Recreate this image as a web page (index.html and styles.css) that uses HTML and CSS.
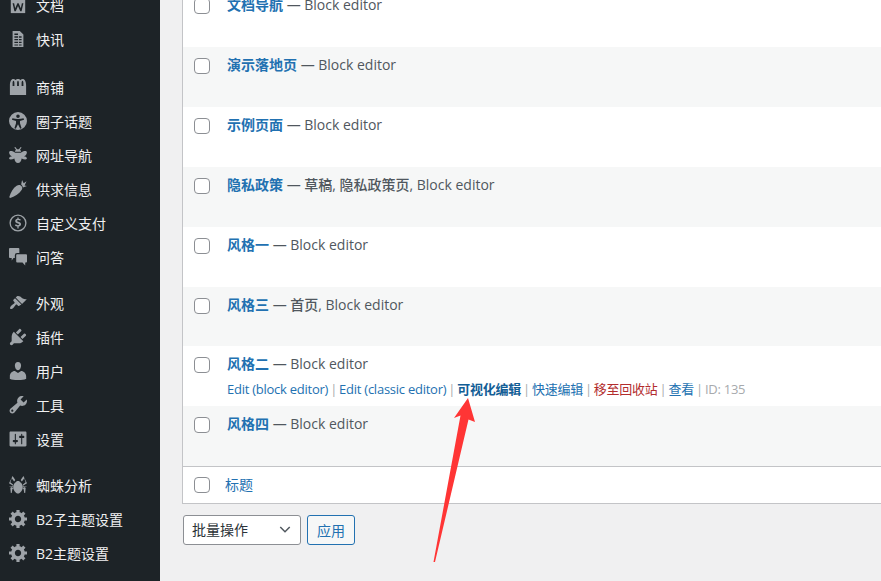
FILE: index.html
```html
<!DOCTYPE html>
<html lang="zh">
<head>
<meta charset="utf-8">
<title>页面</title>
<link rel="stylesheet" href="styles.css">
</head>
<body>
<div class="shell">
  <nav class="side">
    <ul class="menu">
      <li><svg viewBox="0 0 20 20"><path d="M2 0h16v19H2z"/><path class="cut" d="M4 8l2 9h1.500L10 11l2.500 6H14l2-9h-1.700l-1.200 5.500L10.700 8H9.300l-2.400 5.500L5.700 8z"/></svg><span>文档</span></li>
      <li><svg viewBox="0 0 20 20"><path fill-rule="evenodd" d="M4 1h8l4 4v14H4zM6 7v1.500h4V7zm5 0v1.500h3V7zM6 10v1.500h4V10zm5 0v1.500h3V10zM6 13v1.500h4V13zm5 0v1.500h3V13zM6 16v1.200h4V16zm5 0v1.200h3V16zM6 4v1.500h4V4z"/></svg><span>快讯</span></li>
      <li class="gap wide"></li>
      <li class="tall"><svg viewBox="0 0 20 20"><path fill-rule="evenodd" d="M1 9V8c0-4 1.500-7 3.800-7 1 0 1.800.5 2.300 1.300C7.800 1.500 8.900 1 10 1s2.200.5 2.900 1.300C13.400 1.500 14.200 1 15.200 1 17.500 1 19 4 19 8v11H1zM4 9V6c0-2 .4-3 1-3s1 1 1 3v3zm5 0V6c0-2 .4-3 1-3s1 1 1 3v3zm5 0V6c0-2 .4-3 1-3s1 1 1 3v3z"/></svg><span>商铺</span></li>
      <li><svg viewBox="0 0 20 20"><path fill-rule="evenodd" d="M10 0a10 10 0 1 1 0 20 10 10 0 0 1 0-20zm0 2.800a2 2 0 1 0 0 4 2 2 0 0 0 0-4zM3.800 7l-.5 1.500L7.800 10v2.500L6 18l1.500.6L10 13.500l2.500 5.100L14 18l-1.800-5.500V10l4.500-1.500-.5-1.500c-4 1.200-8.400 1.200-12.400 0z"/></svg><span>圈子话题</span></li>
      <li><svg viewBox="0 0 20 20"><path d="M7 1l2 2.500h2L13 1l1 .7-1.800 2.600c.8.600 1.300 1.400 1.300 2.200h-7c0-.8.500-1.600 1.300-2.200L5.900 1.700zM6.800 7.500h6.400c2-2 5.300-2.500 6.300-1.500s0 4.500-3 5.500c2.500.3 3.800 1.700 3.300 2.800s-3.300 1-5.800-.5c-.2 2.700-1.800 5.200-4 5.200s-3.800-2.500-4-5.200C3.500 15.300.700 15.400.200 14.300S1 11.800 3.500 11.500C.500 10.500-.500 7 .5 6s4.300-.5 6.300 1.500z"/></svg><span>网址导航</span></li>
      <li><svg viewBox="0 0 20 20"><path d="M13 6c1.800 1.200 2.300 3 1.200 4.800C11.500 15 6.500 18.500 2 19.800 .800 20.100.200 19.500.500 18.300 2 13.500 4.500 9 8.500 6.300c1.600-1 3.200-1 4.500-.3zM13.500 5l1-5 1.800 3.500L19.500 1.500 17.300 6l2.700.8-4.500 1.400C15 6.800 14.500 5.700 13.500 5z"/></svg><span>供求信息</span></li>
      <li><svg viewBox="0 0 20 20"><path fill-rule="evenodd" d="M10 .5a9.500 9.500 0 1 1 0 19 9.500 9.500 0 0 1 0-19zM10 2a8 8 0 1 0 0 16A8 8 0 0 0 10 2zM9.300 4h1.400v1.300c1 .1 1.800.4 2.400.9l-.7 1.200c-.6-.4-1.300-.7-2.200-.7-.8 0-1.300.3-1.300.8 0 1.400 4.500.7 4.500 3.900 0 1.300-1 2.200-2.700 2.400V16H9.300v-2.200c-1.100-.1-2-.5-2.700-1.100l.8-1.200c.7.600 1.500.9 2.500.9.900 0 1.500-.3 1.500-.9 0-1.500-4.500-.7-4.500-3.800 0-1.300 1-2.100 2.400-2.300z"/></svg><span>自定义支付</span></li>
      <li><svg viewBox="0 0 20 20"><path d="M1 0h9.500a1 1 0 0 1 1 1v4.500H9a2.500 2.500 0 0 0-2.500 2.500v3H5l-2 3v-3H1a1 1 0 0 1-1-1V1a1 1 0 0 1 1-1zM9 7h10a1 1 0 0 1 1 1v7a1 1 0 0 1-1 1h-1v3.500l-3-3.500H9a1 1 0 0 1-1-1V8a1 1 0 0 1 1-1z"/></svg><span>问答</span></li>
      <li class="gap"></li>
      <li><svg viewBox="0 0 20 20"><path d="M14.480 11.060 7.410 3.990l1.500-1.500c.5-.56 2.300-.47 3.510.32 1.210.8 1.430 1.280 2.910 2.100 1.180.64 2.450 1.260 4.450.85zm-.71.71L6.700 4.700 4.930 6.470c-.39.39-.39 1.020 0 1.410l1.060 1.060c.39.39.39 1.030 0 1.420-.6.6-1.430 1.110-2.210 1.690-.35.26-.7.53-1.010.84-.95.95-2.150 2.600-1.350 3.600.8.8 2.650-.4 3.600-1.350.31-.31.58-.66.84-1.010.58-.78 1.090-1.610 1.690-2.210.39-.39 1.030-.39 1.420 0l1.060 1.060c.39.39 1.020.39 1.410 0z"/></svg><span>外观</span></li>
      <li><svg viewBox="1.500 1.500 17 17"><path d="M13.110 4.360 9.870 7.600 8 5.730l3.240-3.240c.35-.34 1.050-.2 1.560.32.52.51.66 1.210.31 1.550zm-8 1.770.91-1.120 9.010 9.010-1.190.84c-.71.71-2.630 1.160-3.820 1.160H6.140L4.900 17.260c-.59.59-1.540.59-2.120 0-.59-.58-.59-1.530 0-2.120l1.240-1.240v-3.880c0-1.130.4-3.190 1.090-3.890zm7.260 3.970 3.240-3.240c.34-.35 1.040-.21 1.550.31.52.51.66 1.210.31 1.550l-3.240 3.250z"/></svg><span>插件</span></li>
      <li><svg viewBox="2 2 16 16"><path d="M10 9.250c-2.270 0-2.730-3.440-2.730-3.440C7 4.020 7.820 2 9.970 2c2.160 0 2.980 2.020 2.710 3.810 0 0-.41 3.440-2.680 3.440zm0 2.570L12.720 10c2.390 0 4.520 2.330 4.520 4.530v2.490s-3.650 1.130-7.240 1.130c-3.650 0-7.240-1.130-7.240-1.130v-2.490c0-2.250 1.940-4.480 4.470-4.480z"/></svg><span>用户</span></li>
      <li><svg viewBox="1.500 2 16.500 16.500"><path d="M16.680 9.770c-1.340 1.340-3.300 1.670-4.950.99l-5.410 6.520c-.99.99-2.590.99-3.580 0s-.99-2.590 0-3.570l6.520-5.420c-.68-1.650-.35-3.610.99-4.950 1.280-1.280 3.120-1.620 4.720-1.060l-2.890 2.890 2.820 2.820 2.860-2.870c.53 1.580.18 3.390-1.080 4.650zM3.810 16.210c.4.39 1.040.39 1.430 0 .4-.4.4-1.040 0-1.430-.39-.4-1.030-.4-1.430 0-.39.39-.39 1.030 0 1.430z"/></svg><span>工具</span></li>
      <li><svg viewBox="1.500 1.500 17 17"><path fill-rule="evenodd" d="M18 16V4c0-.55-.45-1-1-1H3c-.55 0-1 .45-1 1v12c0 .55.45 1 1 1h14c.55 0 1-.45 1-1zM8 11h1c.55 0 1 .45 1 1s-.45 1-1 1H8v1.500c0 .28-.22.5-.5.5s-.5-.22-.5-.5V13H6c-.55 0-1-.45-1-1s.45-1 1-1h1V5.500c0-.28.22-.5.5-.5s.5.22.5.5V11zm5-2h-1c-.55 0-1-.45-1-1s.45-1 1-1h1V5.500c0-.28.22-.5.5-.5s.5.22.5.5V7h1c.55 0 1 .45 1 1s-.45 1-1 1h-1v5.500c0 .28-.22.5-.5.5s-.5-.22-.5-.5V9z"/></svg><span>设置</span></li>
      <li class="gap narrow"></li>
      <li class="tall"><svg viewBox="0 0 20 20"><path d="M10 5.500c1 0 2 .5 2.500 1.500 1.700 1 2.800 3 2.800 5.500 0 3.300-2.800 7-5.300 7s-5.300-3.700-5.300-7c0-2.500 1.100-4.500 2.800-5.500.5-1 1.500-1.500 2.500-1.500zM4 0 7 4.500 5.700 6 3 2.500 1.500 7l3 2.500v1.200L0 8zm12 0-3 4.500L14.300 6 17 2.500 18.500 7l-3 2.500v1.200L20 8zM0 12l4.500-.5v1l-3 .8L2 19l1 0 .8-4.500 1-.5v-.5zm20 0-4.500-.5v1l3 .8L18 19h-1l-.8-4.500-1-.5v-.5z"/></svg><span>蜘蛛分析</span></li>
      <li><svg viewBox="1 2 17 17"><path fill-rule="evenodd" d="M18 12h-2.180c-.17.7-.44 1.350-.81 1.930l1.540 1.540-2.100 2.100-1.540-1.540c-.58.36-1.230.63-1.910.79V19H8v-2.180c-.68-.16-1.330-.43-1.910-.79l-1.540 1.540-2.120-2.120 1.540-1.540c-.36-.58-.63-1.230-.79-1.910H1V9.030h2.170c.16-.7.44-1.350.8-1.940L2.430 5.550l2.100-2.100 1.540 1.540c.58-.37 1.240-.64 1.930-.81V2h3v2.180c.68.16 1.330.43 1.910.79l1.540-1.540 2.120 2.120-1.540 1.540c.36.59.64 1.240.8 1.940H18zm-8.500 1.500c1.660 0 3-1.340 3-3s-1.340-3-3-3-3 1.340-3 3 1.340 3 3 3z"/></svg><span>B2子主题设置</span></li>
      <li><svg viewBox="1 2 17 17"><path fill-rule="evenodd" d="M18 12h-2.180c-.17.7-.44 1.350-.81 1.930l1.540 1.540-2.100 2.100-1.540-1.540c-.58.36-1.230.63-1.910.79V19H8v-2.180c-.68-.16-1.330-.43-1.910-.79l-1.540 1.540-2.120-2.120 1.540-1.540c-.36-.58-.63-1.230-.79-1.910H1V9.030h2.170c.16-.7.44-1.350.8-1.940L2.430 5.550l2.100-2.100 1.540 1.540c.58-.37 1.240-.64 1.930-.81V2h3v2.180c.68.16 1.330.43 1.910.79l1.540-1.540 2.120 2.120-1.540 1.540c.36.59.64 1.240.8 1.940H18zm-8.500 1.500c1.660 0 3-1.340 3-3s-1.340-3-3-3-3 1.340-3 3 1.340 3 3 3z"/></svg><span>B2主题设置</span></li>
    </ul>
  </nav>
  <main class="main">
    <div class="table">
      <div class="row"><i class="check"></i><div class="cell"><p class="line"><a class="title">文档导航</a> — Block editor</p></div></div>
      <div class="row alt"><i class="check"></i><div class="cell"><p class="line"><a class="title">演示落地页</a> — Block editor</p></div></div>
      <div class="row"><i class="check"></i><div class="cell"><p class="line"><a class="title">示例页面</a> — Block editor</p></div></div>
      <div class="row alt"><i class="check"></i><div class="cell"><p class="line"><a class="title">隐私政策</a> — 草稿, 隐私政策页, Block editor</p></div></div>
      <div class="row"><i class="check"></i><div class="cell"><p class="line"><a class="title">风格一</a> — Block editor</p></div></div>
      <div class="row alt short"><i class="check"></i><div class="cell"><p class="line"><a class="title">风格三</a> — 首页, Block editor</p></div></div>
      <div class="row"><i class="check"></i><div class="cell"><p class="line"><a class="title">风格二</a> — Block editor</p>
        <p class="actions"><a>Edit (block editor)</a><b>|</b><a>Edit (classic editor)</a><b>|</b><a class="strong">可视化编辑</a><b>|</b><a>快速编辑</a><b>|</b><a class="trash">移至回收站</a><b>|</b><a>查看</a><b>|</b><span class="id">ID: 135</span></p></div></div>
      <div class="row alt"><i class="check"></i><div class="cell"><p class="line"><a class="title">风格四</a> — Block editor</p></div></div>
      <div class="foot"><i class="check"></i><a class="foot-link">标题</a></div>
    </div>
    <div class="bulk">
      <div class="select"><span>批量操作</span><svg viewBox="0 0 20 20"><path d="M4 6.500l6 6 6-6 1.500 1.500-7.500 7.500L2.500 8z"/></svg></div>
      <div class="apply">应用</div>
    </div>
  </main>
</div>
<svg class="arrow" viewBox="0 0 881 581"><path d="M468 398 475 422 468.500 419.500 435 562 433.500 562 460.500 415.500 454 418z"/></svg>
</body>
</html>
```
FILE: styles.css
```css
* { box-sizing: border-box; }
html, body { margin: 0; height: 100%; overflow: hidden; }
body {
  background: #f0f0f1;
  color: #50575e;
  font-family: "Open Sans", "Noto Sans CJK SC", sans-serif;
  font-size: 14px;
}
p { margin: 0; }
ul { list-style: none; margin: 0; padding: 0; }
.shell { display: flex; height: 581px; overflow: hidden; }
.side { width: 160px; flex: none; background: #1d2327; overflow: hidden; }
.menu { margin-top: -12px; }
.menu li {
  height: 34px;
  display: flex;
  align-items: center;
  color: #f0f0f1;
  font-size: 14px;
}
.menu li.tall { height: 35px; }
.menu li.gap { height: 12px; }
.menu li.gap.wide { height: 13px; }
.menu li.gap.narrow { height: 11px; }
.menu svg { width: 18px; height: 18px; margin-left: 9px; margin-right: 9px; fill: #9ea3a8; flex: none; }
.menu svg .cut { fill: #1d2327; }
.main { flex: 1; min-width: 0; padding-left: 22px; overflow: hidden; }
.table {
  width: 720px;
  margin-top: -13px;
  background: #fff;
  border: 1px solid #c3c4c7;
  border-top: 0;
}
.row { height: 60px; display: flex; padding-left: 11px; }
.row.alt { background: #f6f7f7; }
.row.short { height: 59px; }
.check {
  flex: none;
  width: 16px; height: 16px;
  margin-top: 11px;
  background: #fff;
  border: 1px solid #8c8f94;
  border-radius: 4px;
}
.cell { padding: 8px 0 0 17px; flex: 1; min-width: 0; }
.line { line-height: 19px; color: #50575e; font-weight: 500; white-space: nowrap; }
.title { color: #2271b1; font-weight: 600; }
.actions { font-size: 13px; line-height: 18px; margin-top: 7px; letter-spacing: -.25px; white-space: nowrap; color: #2271b1; }
.actions b { font-weight: 400; color: #a7aaad; margin: 0 2px; }
.strong { font-weight: 700; color: #135e96; }
.trash { color: #b32d2e; }
.id { color: #a7aaad; }
.foot { height: 37px; display: flex; align-items: center; padding-left: 11px; border-top: 1px solid #c3c4c7; }
.foot .check { margin-top: 0; }
.foot-link { color: #2271b1; margin: 0 0 2px 15px; }
.bulk { display: flex; gap: 6px; margin: 11px 0 0 1px; }
.select {
  width: 118px; height: 30px;
  display: flex; align-items: center; justify-content: space-between;
  padding: 0 8px 2px;
  background: #fff;
  border: 1px solid #8c8f94;
  border-radius: 3px;
  color: #2c3338;
}
.select svg { width: 14px; height: 14px; fill: #50575e; }
.apply {
  width: 48px; height: 30px;
  display: flex; align-items: center; justify-content: center;
  padding-bottom: 1px;
  background: #f6f7f7;
  border: 1px solid #2271b1;
  border-radius: 3px;
  color: #2271b1;
}
.arrow { position: absolute; left: 0; top: 0; width: 881px; height: 581px; fill: #ff3535; pointer-events: none; }
```
